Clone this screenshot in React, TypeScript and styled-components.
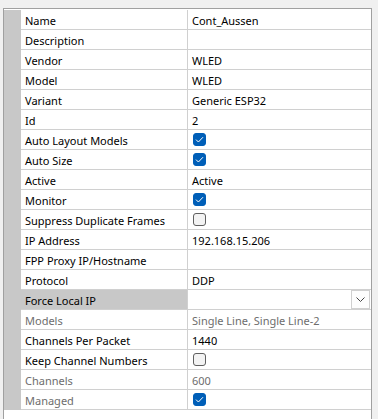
import styled, { createGlobalStyle } from "styled-components";

type Prop = {
  label: string;
  value?: string;
  check?: boolean;
  disabled?: boolean;
  selected?: boolean;
  combo?: boolean;
};

const props: Prop[] = [
  { label: "Name", value: "Cont_Aussen" },
  { label: "Description", value: "" },
  { label: "Vendor", value: "WLED" },
  { label: "Model", value: "WLED" },
  { label: "Variant", value: "Generic ESP32" },
  { label: "Id", value: "2" },
  { label: "Auto Layout Models", check: true },
  { label: "Auto Size", check: true },
  { label: "Active", value: "Active" },
  { label: "Monitor", check: true },
  { label: "Suppress Duplicate Frames", check: false },
  { label: "IP Address", value: "192.168.15.206" },
  { label: "FPP Proxy IP/Hostname", value: "" },
  { label: "Protocol", value: "DDP" },
  { label: "Force Local IP", selected: true, combo: true },
  { label: "Models", value: "Single Line, Single Line-2", disabled: true },
  { label: "Channels Per Packet", value: "1440" },
  { label: "Keep Channel Numbers", check: false },
  { label: "Channels", value: "600", disabled: true },
  { label: "Managed", check: true, disabled: true },
];

export default function App() {
  return (
    <>
      <GlobalStyle />
      <Grid>
        {props.map((p) => (
          <Row key={p.label}>
            <Margin />
            <Label $selected={p.selected} $disabled={p.disabled}>
              {p.label}
            </Label>
            <Value $disabled={p.disabled}>
              {p.check !== undefined ? (
                <CheckBox $checked={p.check}>
                  {p.check && (
                    <svg width="9" height="7" viewBox="0 0 9 7">
                      <path
                        d="M1 3.6 L3.4 6 L8 1.2"
                        fill="none"
                        stroke="#fff"
                        strokeWidth="1"
                      />
                    </svg>
                  )}
                </CheckBox>
              ) : p.combo ? (
                <DropButton>
                  <svg width="9" height="5" viewBox="0 0 9 5">
                    <path d="M0.5 0.5 L4.5 4.5 L8.5 0.5" fill="none" stroke="#444" strokeWidth="1" />
                  </svg>
                </DropButton>
              ) : (
                <Text>{p.value}</Text>
              )}
            </Value>
          </Row>
        ))}
      </Grid>
    </>
  );
}

const GlobalStyle = createGlobalStyle`
  body {
    margin: 0;
    background: #f0f0f0;
    font-family: "Noto Sans", "Open Sans", sans-serif;
    font-size: 11px;
  }
`;

const Grid = styled.div`
  margin: 8px 0 0 3px;
  width: 367px;
  height: 420px;
  padding-top: 1px;
  border: 1px solid #a0a0a0;
  border-bottom: none;
  background: #fff;
`;

const Row = styled.div`
  display: grid;
  grid-template-columns: 17px 167px 1fr;
  height: 20px;
`;

const Margin = styled.div`
  background: #c8c8c8;
`;

const Label = styled.div<{ $selected?: boolean; $disabled?: boolean }>`
  display: flex;
  align-items: center;
  padding: 1px 0 0 4px;
  border-right: 1px solid #d0d0d0;
  border-bottom: 1px solid #d0d0d0;
  background: ${(p) => (p.$selected ? "#c8c8c8" : "#fff")};
  color: ${(p) => (p.$disabled ? "#6d6d6d" : "#000")};
  white-space: nowrap;
`;

const Value = styled.div<{ $disabled?: boolean }>`
  position: relative;
  display: flex;
  align-items: center;
  padding-left: 4px;
  border-bottom: 1px solid #d0d0d0;
  color: ${(p) => (p.$disabled ? "#6d6d6d" : "#000")};
  white-space: nowrap;
`;

const Text = styled.span`
  padding-top: 1px;
`;

const CheckBox = styled.span<{ $checked: boolean }>`
  display: flex;
  align-items: center;
  justify-content: center;
  box-sizing: border-box;
  width: 13px;
  height: 13px;
  margin-left: 1px;
  border-radius: 3px;
  background: ${(p) => (p.$checked ? "#005fb8" : "#f3f3f3")};
  border: 1px solid ${(p) => (p.$checked ? "#005fb8" : "#5f5f5f")};
`;

const DropButton = styled.span`
  position: absolute;
  right: 1px;
  top: 0;
  bottom: 0;
  width: 17px;
  display: flex;
  align-items: center;
  justify-content: center;
  border: 1px solid #d0d0d0;
  background: #fdfdfd;
`;
